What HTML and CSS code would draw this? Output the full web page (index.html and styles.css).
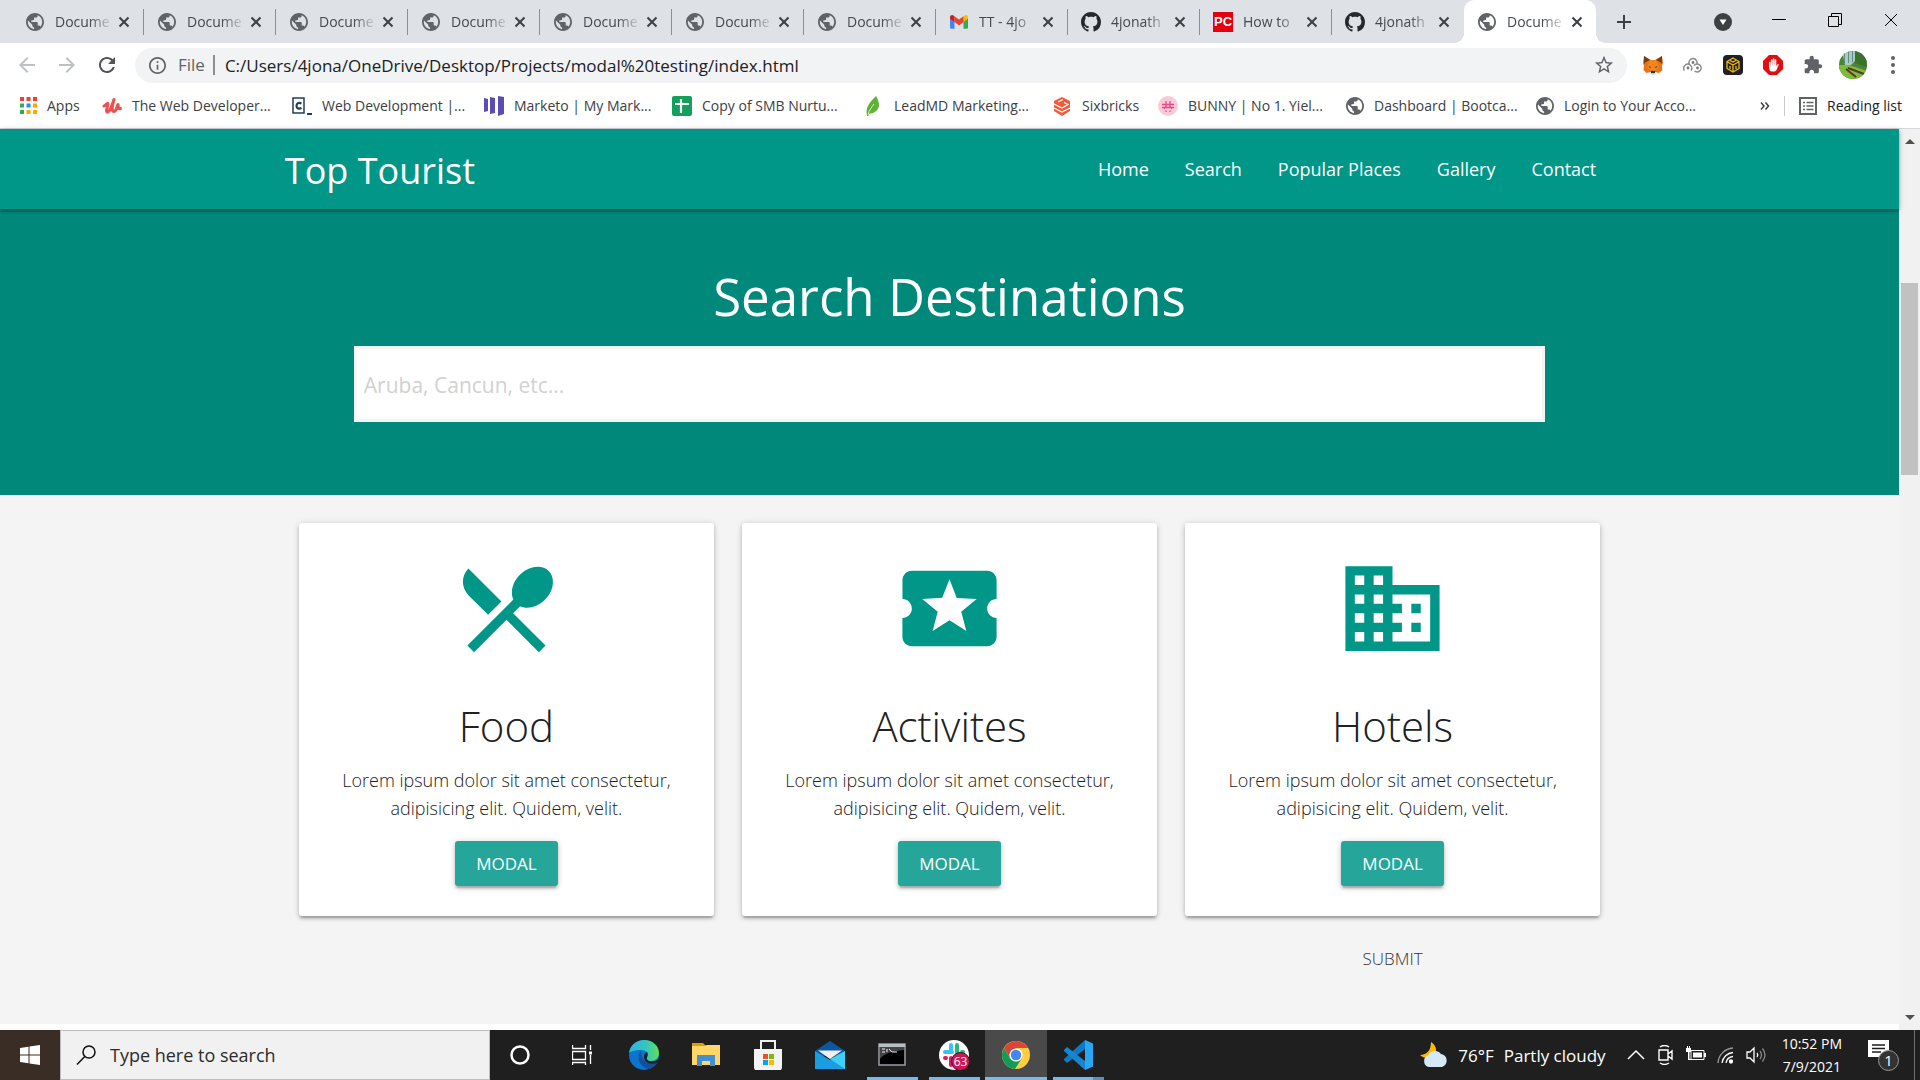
FILE: index.html
```html
<!DOCTYPE html>
<html lang="en">
<head>
<meta charset="utf-8">
<title>Document</title>
<link rel="stylesheet" href="styles.css">
</head>
<body>
<svg class="sprite" aria-hidden="true">
  <symbol id="globe" viewBox="2 2 20 20"><path fill="#5f6368" d="M12 2C6.48 2 2 6.48 2 12s4.48 10 10 10 10-4.48 10-10S17.52 2 12 2zm-1 17.93c-3.95-.49-7-3.85-7-7.93 0-.62.08-1.21.21-1.79L9 15v1c0 1.1.9 2 2 2v1.93zm6.9-2.54c-.26-.81-1-1.39-1.9-1.39h-1v-3c0-.55-.45-1-1-1H8v-2h2c.55 0 1-.45 1-1V7h2c1.1 0 2-.9 2-2v-.41c2.93 1.19 5 4.06 5 7.41 0 2.08-.8 3.97-2.1 5.39z"/></symbol>
  <symbol id="x" viewBox="0 0 12 12"><path d="M1.5 1.5l9 9M10.500 1.500l-9 9" stroke="#3c4043" stroke-width="2" fill="none"/></symbol>
  <symbol id="github" viewBox="0 0 16 16"><path fill="#24292e" d="M8 0C3.58 0 0 3.58 0 8c0 3.54 2.29 6.53 5.47 7.59.4.07.55-.17.55-.38 0-.19-.01-.82-.01-1.49-2.01.37-2.53-.49-2.69-.94-.09-.23-.48-.94-.82-1.13-.28-.15-.68-.52-.01-.53.63-.01 1.08.58 1.23.82.72 1.21 1.87.87 2.33.66.07-.52.28-.87.51-1.07-1.78-.2-3.64-.89-3.64-3.95 0-.87.31-1.59.82-2.15-.08-.2-.36-1.02.08-2.12 0 0 .67-.21 2.2.82.64-.18 1.320-.27 2-.27s1.360.09 2 .27c1.530-1.040 2.200-.82 2.200-.82.44 1.100.16 1.920.08 2.120.51.56.82 1.270.82 2.150 0 3.070-1.870 3.750-3.650 3.950.29.25.54.73.54 1.480 0 1.070-.01 1.930-.01 2.200 0 .21.15.46.55.38A8.010 8.010 0 0 0 16 8c0-4.420-3.580-8-8-8z"/></symbol>
</svg>

<header class="chrome">
  <div class="tabstrip">
    <div class="tab"><svg class="fav"><use href="#globe"/></svg><span class="tab-title">Docume</span><button class="tab-x" aria-label="Close tab"><svg><use href="#x"/></svg></button></div>
    <div class="tab"><svg class="fav"><use href="#globe"/></svg><span class="tab-title">Docume</span><button class="tab-x" aria-label="Close tab"><svg><use href="#x"/></svg></button></div>
    <div class="tab"><svg class="fav"><use href="#globe"/></svg><span class="tab-title">Docume</span><button class="tab-x" aria-label="Close tab"><svg><use href="#x"/></svg></button></div>
    <div class="tab"><svg class="fav"><use href="#globe"/></svg><span class="tab-title">Docume</span><button class="tab-x" aria-label="Close tab"><svg><use href="#x"/></svg></button></div>
    <div class="tab"><svg class="fav"><use href="#globe"/></svg><span class="tab-title">Docume</span><button class="tab-x" aria-label="Close tab"><svg><use href="#x"/></svg></button></div>
    <div class="tab"><svg class="fav"><use href="#globe"/></svg><span class="tab-title">Docume</span><button class="tab-x" aria-label="Close tab"><svg><use href="#x"/></svg></button></div>
    <div class="tab"><svg class="fav"><use href="#globe"/></svg><span class="tab-title">Docume</span><button class="tab-x" aria-label="Close tab"><svg><use href="#x"/></svg></button></div>
    <div class="tab"><svg class="fav" viewBox="0 0 24 18"><path fill="#4285f4" d="M0 2v14a2 2 0 0 0 2 2h4V8z"/><path fill="#34a853" d="M24 2v14a2 2 0 0 1-2 2h-4V8z"/><path fill="#c5221f" d="M0 2.500C0 0 3 -1 5 .5l1 .8V9L0 4.500z"/><path fill="#fbbc04" d="M24 2.500C24 0 21-1 19 .5l-1 .8V9l6-4.500z"/><path fill="#ea4335" d="M6 1.300l6 4.500 6-4.500V9l-6 4.500L6 9z"/></svg><span class="tab-title">TT - 4jo</span><button class="tab-x" aria-label="Close tab"><svg><use href="#x"/></svg></button></div>
    <div class="tab"><svg class="fav fav-lg"><use href="#github"/></svg><span class="tab-title">4jonath</span><button class="tab-x" aria-label="Close tab"><svg><use href="#x"/></svg></button></div>
    <div class="tab"><span class="fav fav-lg pcmag">PC</span><span class="tab-title">How to</span><button class="tab-x" aria-label="Close tab"><svg><use href="#x"/></svg></button></div>
    <div class="tab last"><svg class="fav fav-lg"><use href="#github"/></svg><span class="tab-title">4jonath</span><button class="tab-x" aria-label="Close tab"><svg><use href="#x"/></svg></button></div>
    <div class="tab active"><svg class="fav"><use href="#globe"/></svg><span class="tab-title">Docume</span><button class="tab-x" aria-label="Close tab"><svg><use href="#x"/></svg></button></div>
    <button class="newtab" aria-label="New tab"><svg viewBox="0 0 16 16"><path d="M8 1v14M1 8h14" stroke="#3c4043" stroke-width="2"/></svg></button>
    <div class="window-controls">
      <button aria-label="Search tabs"><svg viewBox="0 0 18 18"><circle cx="9" cy="9" r="9" fill="#3c4043"/><path d="M5.500 6.500h7L9 12z" fill="#fff"/></svg></button>
      <button aria-label="Minimize"><svg viewBox="0 0 18 18"><path d="M2 6.500h14" stroke="#000"/></svg></button>
      <button aria-label="Restore"><svg viewBox="0 0 18 18"><path d="M2.500 3.500h10v10h-10zM5.500 3V.5h10v11H13" fill="none" stroke="#000"/></svg></button>
      <button aria-label="Close"><svg viewBox="0 0 18 18"><path d="M3 1l12 12M15 1L3 13" stroke="#000"/></svg></button>
    </div>
  </div>

  <div class="toolbar">
    <button class="tool" aria-label="Back"><svg viewBox="0 0 24 24"><path fill="#bdc1c6" d="M20 11H7.830l5.590-5.590L12 4l-8 8 8 8 1.410-1.410L7.830 13H20v-2z"/></svg></button>
    <button class="tool" aria-label="Forward"><svg viewBox="0 0 24 24"><path fill="#bdc1c6" d="M4 13h12.170l-5.590 5.590L12 20l8-8-8-8-1.410 1.410L16.170 11H4v2z"/></svg></button>
    <button class="tool" aria-label="Reload"><svg viewBox="0 0 24 24"><path fill="#505357" d="M17.65 6.35C16.2 4.9 14.21 4 12 4c-4.42 0-7.99 3.58-7.99 8s3.57 8 7.99 8c3.73 0 6.84-2.55 7.73-6h-2.08c-.82 2.33-3.04 4-5.65 4-3.31 0-6-2.69-6-6s2.69-6 6-6c1.66 0 3.14.69 4.22 1.78L13 11h7V4l-2.35 2.35z"/></svg></button>
    <div class="omnibox">
      <svg class="info" viewBox="2 2 20 20"><path fill="#5f6368" d="M11 7h2v2h-2zm0 4h2v6h-2zm1-9C6.480 2 2 6.480 2 12s4.480 10 10 10 10-4.480 10-10S17.520 2 12 2zm0 18c-4.410 0-8-3.590-8-8s3.590-8 8-8 8 3.590 8 8-3.590 8-8 8z"/></svg>
      <span class="scheme">File</span>
      <input class="url" aria-label="Address" value="C:/Users/4jona/OneDrive/Desktop/Projects/modal%20testing/index.html">
      <svg class="star" viewBox="0 0 24 24"><path fill="#5f6368" d="M22 9.240l-7.190-.62L12 2 9.190 8.630 2 9.240l5.460 4.730L5.820 21 12 17.270 18.180 21l-1.630-7.030L22 9.240zM12 15.400l-3.760 2.270 1-4.280-3.320-2.880 4.380-.38L12 6.100l1.710 4.040 4.380.38-3.320 2.880 1 4.280L12 15.400z"/></svg>
    </div>
    <div class="extensions">
      <button aria-label="MetaMask"><svg viewBox="0 0 20 20"><path fill="#e2761b" d="M1 1l7 4h4l7-4 1 7-1 3 .5 4-3.500 3-4-1-2 1H9.500l-2-1-4 1L.5 15 1 11 0 8z"/><path fill="#763d16" d="M1 1l6 4-4 2-2 2zM19 1l-6 4 4 2 2 2z"/><path fill="#f6851b" d="M7 5h6l3 7-3 3H7l-3-3z"/><path fill="#233447" d="M5.500 11l2.500 1-1 1zM14.500 11L12 12l1 1zM8 16h4v2H8z"/><path fill="#d7c1b3" d="M7.500 18h5v1.500h-5z"/></svg></button>
      <button aria-label="Cloud extension"><svg viewBox="0 0 20 20" fill="none" stroke="#8a8a8a" stroke-width="1.400"><path d="M6.500 9.500a4 4 0 1 1 7 0M1.500 15.500a4 4 0 1 1 6.500 0M11 10.500a4 4 0 1 1 .5 5.500"/><g fill="#777" stroke="none"><circle cx="10" cy="7.500" r="1.400"/><circle cx="5" cy="13" r="1.400"/><circle cx="14.500" cy="13" r="1.400"/></g></svg></button>
      <button aria-label="Wallet"><svg viewBox="0 0 20 20"><rect width="20" height="20" rx="4" fill="#1e2026"/><path d="M10 3l6 3.500v7L10 17l-6-3.500v-7zM4.500 7L10 10l5.500-3M10 10v6.500M7 5.500L10 7l3-1.500M7 11v3M13 11v3" fill="none" stroke="#f0b90b" stroke-width="1.300"/></svg></button>
      <button aria-label="AdBlock"><svg viewBox="0 0 20 20"><path fill="#e40d0d" d="M6 0h8l6 6v8l-6 6H6l-6-6V6z"/><path fill="#fff" d="M6 12V7.500a.8.8 0 0 1 1.600 0V10h.3V5a.8.8 0 0 1 1.600 0v4.500h.3V4a.8.8 0 0 1 1.600 0v5.500h.3V5a.8.8 0 0 1 1.600 0v6l1-1.500c.6-.8 1.600-.3 1.300.5L13.500 15c-1 2-6 2-7 0z"/></svg></button>
      <button aria-label="Extensions"><svg viewBox="0 0 24 24"><path fill="#5f6368" d="M20.500 11H19V7c0-1.100-.9-2-2-2h-4V3.500C13 2.120 11.880 1 10.500 1S8 2.120 8 3.500V5H4c-1.100 0-1.990.9-1.990 2v3.800H3.500c1.490 0 2.700 1.210 2.700 2.700s-1.210 2.700-2.700 2.700H2V20c0 1.100.9 2 2 2h3.800v-1.500c0-1.490 1.210-2.700 2.700-2.700 1.490 0 2.700 1.210 2.700 2.700V22H17c1.100 0 2-.9 2-2v-4h1.500c1.380 0 2.500-1.120 2.500-2.500S21.880 11 20.500 11z"/></svg></button>
      <button class="avatar" aria-label="Profile"><svg viewBox="0 0 28 28"><defs><clipPath id="av"><circle cx="14" cy="14" r="14"/></clipPath></defs><g clip-path="url(#av)"><path fill="#4b8436" d="M0 0h28v28H0z"/><path fill="#a9cbc3" d="M3 0h13v10l-4 4H6z"/><path fill="#5d8f80" d="M5 0h1v12H5zM9 0h1v12H9zM13 0h1v11h-1z"/><path fill="#3c702d" d="M16 0h12v16l-12-4z"/><path fill="#7dbb3c" d="M0 14l10 0 18 6v8H0z"/><path d="M9 17l16 6M7 18l10 8" stroke="#5b3a25" stroke-width="2"/></g></svg></button>
      <button aria-label="Menu"><svg viewBox="0 0 20 20" fill="#5f6368"><circle cx="10" cy="3" r="2"/><circle cx="10" cy="10" r="2"/><circle cx="10" cy="17" r="2"/></svg></button>
    </div>
  </div>

  <nav class="bookmarks" aria-label="Bookmarks">
    <div class="bookmark-list">
      <a href="#"><svg class="bi bi-apps" viewBox="0 0 17 17"><path fill="#ea4335" d="M0 0h4v4H0zM6.500 0h4v4h-4zM13 0h4v4h-4z"/><path fill="#34a853" d="M0 6.500h4v4H0zM0 13h4v4H0z"/><path fill="#1a90ff" d="M6.500 6.500h4v4h-4z"/><path fill="#fbab00" d="M13 6.500h4v4h-4zM6.500 13h4v4h-4zM13 13h4v4h-4z"/></svg>Apps</a>
      <a href="#"><svg class="bi" viewBox="0 0 20 20"><path fill="none" stroke="#ec5252" stroke-width="3" stroke-linecap="round" stroke-linejoin="round" d="M2 10c2-1 4-4 4-2s-3 8-.5 8S10 9 12 3.500C10.500 8 9 16 12 15.500s2.500-5 4-7c.5 2 0 5 2.500 4"/></svg>The Web Developer...</a>
      <a href="#"><svg class="bi" viewBox="0 0 20 20"><path fill="none" stroke="#1f4056" stroke-width="1.500" d="M1 2h11v15H1z"/><path fill="none" stroke="#1f4056" stroke-width="2.200" d="M9.500 7.500c-3-1.500-5 0-5 2.200s2 3.800 5 2.300M15 18h5"/></svg>Web Development |...</a>
      <a href="#"><svg class="bi" viewBox="0 0 20 20"><path fill="#5c4bb5" d="M0 2l4 1v12l-4 1zM6 1l5 1v15l-5 1zM14 0l6 1v17l-6 2z"/></svg>Marketo | My Mark...</a>
      <a href="#"><svg class="bi" viewBox="0 0 20 20"><rect width="20" height="20" rx="2" fill="#12a05c"/><path stroke="#fff" stroke-width="2.200" d="M9 3v14M3 8h14"/></svg>Copy of SMB Nurtu...</a>
      <a href="#"><svg class="bi" viewBox="0 0 20 20"><path fill="#5fb236" d="M12 0c4 7 5 13-3 17-2 .5-4 0-4.500 3H3c-2-9 3-14 9-20z"/><path d="M4 19c1-5 4-8 6-11" fill="none" stroke="#d4efc3"/></svg>LeadMD Marketing...</a>
      <a href="#"><svg class="bi" viewBox="0 0 20 20"><path fill="#f15a38" d="M10 1l8 4v10l-8 5-8-5V5z"/><path fill="none" stroke="#fff" stroke-width="1.300" d="M2 8l8 4 6-3.500-4-2M2 12l8 4 8-4M6 6l5-2.500"/></svg>Sixbricks</a>
      <a href="#"><svg class="bi" viewBox="0 0 20 20"><circle cx="10" cy="10" r="10" fill="#fbcad6"/><path fill="none" stroke="#df4c8c" stroke-width="1.300" d="M8 5v5l-2 3M12 5v5l2 3M4 8.500h12M4 11.500h12M8 14.500v1.500M12 14.500v1.500"/></svg>BUNNY | No 1. Yiel...</a>
      <a href="#"><svg class="bi globe"><use href="#globe"/></svg>Dashboard | Bootca...</a>
      <a href="#"><svg class="bi globe"><use href="#globe"/></svg>Login to Your Acco...</a>
    </div>
    <button class="more" aria-label="More bookmarks"><svg viewBox="0 0 10 10"><path d="M1 1.500L4 5 1 8.500M5.500 1.500l3 3.500-3 3.500" fill="none" stroke="#3c4043" stroke-width="1.500"/></svg></button>
    <button class="reading"><svg viewBox="0 0 18 18"><path d="M1 1h16v16H1z" fill="none" stroke="#5f6368" stroke-width="2"/><path d="M4 5.500h2M7.500 5.500h7M4 9h2M7.500 9h7M4 12.500h2M7.500 12.500h7" stroke="#5f6368" stroke-width="1.500"/></svg>Reading list</button>
  </nav>
</header>

<div class="viewport">
  <div class="page">
    <nav class="navbar">
      <div class="container nav-inner">
        <a class="brand" href="#">Top Tourist</a>
        <ul class="nav-links">
          <li><a href="#home">Home</a></li>
          <li><a href="#search">Search</a></li>
          <li><a href="#popular">Popular Places</a></li>
          <li><a href="#gallery">Gallery</a></li>
          <li><a href="#contact">Contact</a></li>
        </ul>
      </div>
    </nav>

    <section class="search" id="search">
      <div class="container search-inner">
        <h3><label for="destination">Search Destinations</label></h3>
        <input id="destination" type="text" placeholder="Aruba, Cancun, etc...">
      </div>
    </section>

    <section class="features">
      <div class="container cards">
        <article class="card">
          <svg class="card-icon" viewBox="0 0 24 24"><path d="M8.100 13.340l2.830-2.830L3.910 3.500c-1.560 1.560-1.560 4.090 0 5.660l4.190 4.180zm6.780-1.810c1.530.71 3.680.21 5.270-1.380 1.910-1.910 2.280-4.650.81-6.120-1.460-1.460-4.200-1.100-6.120.81-1.590 1.590-2.090 3.740-1.380 5.270L3.700 19.870l1.410 1.410L12 14.410l6.880 6.880 1.410-1.410L13.410 13l1.470-1.470z"/></svg>
          <h4>Food</h4>
          <p>Lorem ipsum dolor sit amet consectetur, adipisicing elit. Quidem, velit.</p>
          <button class="btn">MODAL</button>
        </article>
        <article class="card">
          <svg class="card-icon" viewBox="0 0 24 24"><path d="M20 12c0-1.100.9-2 2-2V6c0-1.100-.9-2-2-2H4c-1.100 0-1.990.9-1.990 2v4c1.100 0 1.990.9 1.990 2s-.89 2-2 2v4c0 1.100.9 2 2 2h16c1.100 0 2-.9 2-2v-4c-1.100 0-2-.9-2-2zm-4.420 4.800L12 14.500l-3.580 2.300 1.080-4.120-3.290-2.690 4.240-.25L12 5.800l1.540 3.950 4.240.25-3.290 2.690 1.090 4.110z"/></svg>
          <h4>Activites</h4>
          <p>Lorem ipsum dolor sit amet consectetur, adipisicing elit. Quidem, velit.</p>
          <button class="btn">MODAL</button>
        </article>
        <article class="card">
          <svg class="card-icon" viewBox="0 0 24 24"><path d="M12 7V3H2v18h20V7H12zM6 19H4v-2h2v2zm0-4H4v-2h2v2zm0-4H4V9h2v2zm0-4H4V5h2v2zm4 12H8v-2h2v2zm0-4H8v-2h2v2zm0-4H8V9h2v2zm0-4H8V5h2v2zm10 12h-8v-2h2v-2h-2v-2h2v-2h-2V9h8v10zm-2-8h-2v2h2v-2zm0 4h-2v2h2v-2z"/></svg>
          <h4>Hotels</h4>
          <p>Lorem ipsum dolor sit amet consectetur, adipisicing elit. Quidem, velit.</p>
          <button class="btn">MODAL</button>
        </article>
        <button class="submit">SUBMIT</button>
      </div>
    </section>
  </div>
  <div class="scrollbar" aria-hidden="true">
    <svg viewBox="0 0 10 6"><path d="M0 6l5-5 5 5z" fill="#505050"/></svg>
    <div class="track"><div class="thumb"></div></div>
    <svg viewBox="0 0 10 6"><path d="M0 0l5 5 5-5z" fill="#505050"/></svg>
  </div>
</div>

<footer class="taskbar">
  <button class="start" aria-label="Start"><svg viewBox="0 0 20 20"><path fill="#fff" d="M0 3l8.500-1.200v7.700H0zM9.500 1.600L20 0v9.500H9.500zM0 10.500h8.500v7.700L0 17zM9.500 10.500H20V20L9.500 18.400z"/></svg></button>
  <label class="find"><svg viewBox="0 0 20 20"><circle cx="13" cy="7" r="6" fill="none" stroke="#111" stroke-width="1.500"/><path d="M8.800 11.500L1 19.500" stroke="#111" stroke-width="1.500"/></svg><input type="text" aria-label="Search Windows" placeholder="Type here to search"></label>
  <div class="apps">
    <button aria-label="Cortana"><svg class="s20" viewBox="0 0 20 20"><circle cx="10" cy="10" r="8.500" fill="none" stroke="#fff" stroke-width="2.500"/></svg></button>
    <button aria-label="Task view"><svg class="s20" viewBox="0 0 20 20" fill="none" stroke="#fff" stroke-width="1.300"><path d="M.5 0v3.500h13V0M.5 6.500h13v8H.5zM.5 20v-2.500h13V20M18.500 0v5M18.500 10v9"/><path d="M17 6.500h3v3h-3z" fill="#fff" stroke="none"/></svg></button>
    <button aria-label="Edge"><svg class="s30" viewBox="0 0 30 30"><defs><linearGradient id="e1" x1="0" x2="1"><stop offset="0" stop-color="#2bb3ea"/><stop offset=".6" stop-color="#36c8b8"/><stop offset="1" stop-color="#62e052"/></linearGradient></defs><circle cx="15" cy="15" r="15" fill="#0a74cf"/><path fill="url(#e1)" d="M0 13C1 5 8 0 15 0c9 0 15 6 15 13 0 5-4 8-8 8-3 0-5-1-4-3 2-4 0-8-6-8-5 0-10 1-12 3z"/><path fill="#124f9e" d="M12 11c-6 7 0 17 8 18 4-1 7-4 9-7-9 4-17-1-17-11z"/><path fill="#1f1f1f" d="M18 12c2 3-1 5 0 7.500 2 2.500 7 2.500 11.500 0l.5 2.500c-3 1.500-6 2-9 1.500-4-.6-6-4-6-7 0-2.500 1.500-3.500 3-4.500z"/></svg></button>
    <button aria-label="File Explorer"><svg class="s30" viewBox="0 0 30 30"><path fill="#e09b00" d="M1 3h11l3 3v4H1z"/><path fill="#ffd667" d="M1 6h12l3-1h13v20H1z"/><path fill="#3f91d4" d="M6 26V15h18v11h-5v-5h-8v5z"/></svg></button>
    <button aria-label="Store"><svg class="s30" viewBox="0 0 30 30"><path fill="none" stroke="#eee" stroke-width="2" d="M8 10V1h14v9"/><path fill="#f3f3f3" d="M1 9h28v19l-1 2H2l-1-2z"/><path fill="#f25022" d="M10 14h5v5h-5z"/><path fill="#7fba00" d="M16 14h5v5h-5z"/><path fill="#00a4ef" d="M10 20h5v5h-5z"/><path fill="#ffb900" d="M16 20h5v5h-5z"/></svg></button>
    <button aria-label="Mail"><svg class="s30" viewBox="0 0 30 30"><path fill="#0a57a8" d="M0 11l15-10 15 10v5H0z"/><path fill="#1b9de2" d="M0 11l15 9 15-9v18H0z"/><path fill="#3ed0f6" d="M30 11v18L15 19z"/><path fill="#f0f0f0" d="M3 10.500h24L15 19z"/></svg></button>
    <button class="open" aria-label="Command Prompt"><svg class="s30" viewBox="0 0 30 30"><path fill="#000" stroke="#9a9fa5" stroke-width="1.500" d="M2 4h26v21H2z"/><path fill="#b8bfc5" d="M2 4h26v3H2z"/><path fill="#444" d="M3 7h24v3C15 11 6 14 3 19z"/><path d="M5 9h3M5 12h3M10 9v3M12 9l3 3M15 12h5" stroke="#eee"/></svg></button>
    <button class="open" aria-label="Slack"><svg class="s30" viewBox="0 0 30 30"><circle cx="15" cy="15" r="15" fill="#fff"/><g stroke-width="4" stroke-linecap="round"><path stroke="#36c5f0" d="M12 5v5M6 12h7"/><path stroke="#2eb67d" d="M18 5v8M24 12h-1"/><path stroke="#e01e5a" d="M6 18h1M12 18v7"/><path stroke="#ecb22e" d="M18 18h6"/></g><circle cx="21.500" cy="21.500" r="9" fill="#cf1757" stroke="#3a0d1e"/><text class="badge-text" x="21.500" y="26" text-anchor="middle">63</text></svg></button>
    <button class="open current" aria-label="Chrome"><svg class="s28" viewBox="0 0 28 28"><circle cx="14" cy="14" r="14" fill="#ffcd40"/><path fill="#db4437" d="M2 7a14 14 0 0 1 24.200 0H14L8 17z"/><path fill="#0f9d58" d="M1.900 7A14 14 0 0 0 13 28l7-11-12 0z"/><circle cx="14" cy="14" r="6.600" fill="#fff"/><circle cx="14" cy="14" r="5.200" fill="#4285f4"/></svg></button>
    <button class="open grouped" aria-label="Visual Studio Code"><svg class="s30" viewBox="0 0 30 30"><path fill="#0b7bc9" d="M22 0v9L4 23l-3-3v-1z"/><path fill="#1586d2" d="M22 30v-9L4 7 1 10v1z"/><path fill="#2aa7f2" d="M22 0l8 3.500v23L22 30z"/></svg></button>
  </div>
  <div class="tray">
    <div class="weather"><svg viewBox="0 0 28 26"><path fill="#ffb900" d="M11 0c5 3 7 9 3 13S4 17 0 13c7 0 11-5 11-13z"/><path fill="#d5e8f8" d="M9 25a6 6 0 0 1-1-11.500 7.500 7.500 0 0 1 13-1.500A6.700 6.700 0 0 1 22 25z"/></svg><span>76°F</span><span>Partly cloudy</span></div>
    <svg class="tray-icon" viewBox="0 0 20 20"><path d="M2 14l8-8 8 8" fill="none" stroke="#fff" stroke-width="1.500"/></svg>
    <svg class="tray-icon" viewBox="0 0 20 20" fill="none" stroke="#fff" stroke-width="1.400"><path d="M3 5h9v10H3zM12 9l4-3v8l-4-3M4 2c3-2 6-2 9 0M4 18c3 2 6 2 9 0"/></svg>
    <svg class="tray-icon" viewBox="0 0 20 20"><path d="M5 5.500h13v9H5z" fill="none" stroke="#fff"/><path d="M7 7.500h9v5H7zM18 8h2v4h-2zM0 3h5v4H0zM2 7h1.500v7H5v1H2z" fill="#fff"/><path d="M1.500 1v3M3.500 1v3" stroke="#fff"/></svg>
    <svg class="tray-icon" viewBox="0 0 20 20" fill="none" stroke="#fff" stroke-width="1.300"><path stroke="#999" d="M2 18A16 16 0 0 1 17 3"/><path d="M6 18A12 12 0 0 1 17 7.500M10 18a8 8 0 0 1 7-6.500"/><circle cx="15" cy="16.500" r="1.500" fill="#fff"/></svg>
    <svg class="tray-icon" viewBox="0 0 20 20" fill="none" stroke="#fff" stroke-width="1.300"><path d="M1 7h3l4-4v14l-4-4H1z"/><path d="M11 8q1.500 2 0 4"/><path stroke="#888" d="M14 6q3 4 0 8M16.500 3.500q5 6.500 0 13"/></svg>
    <div class="clock"><span>10:52 PM</span><span>7/9/2021</span></div>
    <button class="notify" aria-label="Notifications"><svg viewBox="0 0 32 32"><path fill="#fff" d="M0 1h21v17h-6l-4 5v-5H0z"/><path d="M4 6h13M4 9.500h13M4 13h9" stroke="#1f1f1f" stroke-width="1.300"/><circle cx="20.500" cy="21.500" r="10" fill="#333" stroke="#999"/><text class="notify-text" x="20.500" y="27" text-anchor="middle">1</text></svg></button>
  </div>
</footer>
</body>
</html>
```
FILE: styles.css
```css
* { box-sizing: border-box; }

body {
  margin: 0;
  min-height: 100vh;
  display: flex;
  flex-direction: column;
  font-family: "Open Sans", "Noto Sans", sans-serif;
  background: #fff;
  color: #212121;
}

button {
  border: 0;
  padding: 0;
  background: none;
  font: inherit;
  color: inherit;
}

input { font: inherit; border: 0; outline: 0; min-width: 0; }
a { color: inherit; text-decoration: none; }
svg { display: block; flex: none; }
.sprite { position: absolute; width: 0; height: 0; }

/* Browser tabs */
.chrome { flex: none; border-bottom: 1px solid #d5d7da; }

.tabstrip {
  display: flex;
  align-items: center;
  height: 43px;
  padding-left: 12px;
  background: #dee1e6;
}

.tab {
  flex: 0 1 132px;
  min-width: 0;
  display: flex;
  align-items: center;
  height: 26px;
  padding: 0 13px 0 14px;
  border-right: 1px solid #8b8e92;
  font-size: 14px;
  color: #45494d;
}

.tab.last { border-color: transparent; }

.tab.active {
  position: relative;
  height: 43px;
  border: 0;
  border-radius: 10px 10px 0 0;
  background: #fff;
}

/* Curved feet that join the active tab to the toolbar */
.tab.active::before,
.tab.active::after {
  content: "";
  position: absolute;
  bottom: 0;
  width: 10px;
  height: 10px;
}

.tab.active::before { right: 100%; background: radial-gradient(circle at 0 0, transparent 10px, #fff 10px); }
.tab.active::after { left: 100%; background: radial-gradient(circle at 100% 0, transparent 10px, #fff 10px); }

.fav { flex: none; width: 18px; height: 18px; margin-right: 11px; }
.fav-lg { width: 20px; height: 20px; margin: 0 10px 0 -1px; }

.pcmag {
  background: #e3000f;
  color: #fff;
  font: bold 13px/20px "Liberation Sans", sans-serif;
  text-align: center;
}

.tab-title {
  flex: 1;
  white-space: nowrap;
  -webkit-mask-image: linear-gradient(90deg, #000 60%, transparent);
  mask-image: linear-gradient(90deg, #000 60%, transparent);
}

.tab-x { margin-left: 5px; }
.tab-x svg { width: 12px; height: 12px; }
.newtab { margin-left: 20px; }
.newtab svg { width: 16px; height: 16px; }
.window-controls { display: flex; gap: 38px; margin-left: auto; margin-right: 20px; }
.window-controls svg { width: 18px; height: 18px; }

/* Toolbar */
.toolbar {
  display: flex;
  align-items: center;
  height: 44px;
  padding: 0 17px 0 15px;
}

.tool { width: 40px; }
.tool svg { width: 24px; height: 24px; }

.omnibox {
  flex: 1;
  display: flex;
  align-items: center;
  height: 35px;
  margin-right: 16px;
  padding: 0 12px 0 14px;
  border-radius: 18px;
  background: #f1f3f4;
  font-size: 17px;
}

.info { width: 17px; height: 17px; margin-right: 12px; }
.scheme { padding-right: 8px; border-right: 2px solid #8b8e92; line-height: 20px; color: #5f6368; }
.url { flex: 1; padding: 0 10px; background: none; color: #202124; }
.star { width: 22px; height: 22px; }
.extensions { display: flex; align-items: center; gap: 20px; }
.extensions svg { width: 20px; height: 20px; }
.extensions .avatar { margin: 0 -4px; }
.extensions .avatar svg { width: 28px; height: 28px; }

/* Bookmarks */
.bookmarks {
  display: flex;
  align-items: center;
  height: 41px;
  padding: 0 18px 4px 20px;
  font-size: 14px;
  color: #3c4043;
}

.bookmark-list {
  flex: 1;
  display: grid;
  grid-template-columns: 82px 190px 192px 188px 192px 188px 106px 188px 190px 1fr;
  white-space: nowrap;
}

.bookmark-list a { display: flex; align-items: center; gap: 10px; }
.bi { width: 20px; height: 20px; }
.bi-apps { width: 17px; height: 17px; }
.globe { width: 18px; height: 18px; }
.more { padding: 0 14px; }
.more svg { width: 10px; height: 10px; }
.reading { display: flex; align-items: center; gap: 10px; height: 20px; padding-left: 14px; border-left: 1px solid #c8cacd; color: #202124; }
.reading svg { width: 18px; height: 18px; }

/* Web page */
.viewport { flex: 1; display: flex; min-height: 0; }
.page { flex: 1; min-width: 0; }
.container { width: 70%; margin: 0 auto; }

.navbar {
  position: relative;
  background: #009688;
  color: #fff;
  box-shadow: 0 2px 3px rgba(0, 0, 0, .3), 0 1px 6px rgba(0, 0, 0, .2);
}

.nav-inner { display: flex; justify-content: space-between; height: 80px; }
.brand { font-size: 36px; line-height: 84px; }
.nav-links { display: flex; margin: 0; padding: 0; list-style: none; font-size: 18px; }
.nav-links a { display: block; padding: 0 18px; line-height: 80px; }

.search { background: #00897b; color: #fff; }
.search-inner { padding: 56px 69px 73px; text-align: center; }
.search h3 { margin: 0 0 19px; font-size: 51px; line-height: 62px; font-weight: 400; }

.search input {
  display: block;
  width: 100%;
  height: 76px;
  padding: 2px 7px 0;
  border: 3px solid #f5f5f5;
  background: #fff;
  font-size: 21px;
}

.search input::placeholder { color: #d1d1d1; opacity: 1; }

.features { padding: 28px 0 43px; background: #f4f4f4; }
.cards { display: grid; grid-template-columns: repeat(3, 1fr); gap: 20px 28px; padding: 0 14px; }

.card {
  display: flex;
  flex-direction: column;
  align-items: center;
  padding: 29px 30px 30px;
  border-radius: 3px;
  background: #fff;
  text-align: center;
  box-shadow: 0 3px 3px rgba(0, 0, 0, .14), 0 4px 1px -2px rgba(0, 0, 0, .12), 0 1px 6px rgba(0, 0, 0, .2);
}

.card-icon { width: 113px; height: 113px; fill: #009688; }
.card h4 { margin: 36px 0 15px; font-size: 42px; line-height: 50px; font-weight: 300; }
.card p { margin: 0 0 19px; font-size: 18px; line-height: 28px; font-weight: 300; }

.btn {
  height: 45px;
  padding: 0 21px;
  border-radius: 3px;
  background: #26a69a;
  color: #fff;
  font-size: 17px;
  box-shadow: 0 3px 3px rgba(0, 0, 0, .14), 0 4px 1px -2px rgba(0, 0, 0, .12), 0 1px 6px rgba(0, 0, 0, .2);
}

.submit { grid-column: 3; justify-self: center; height: 45px; font-size: 17px; font-weight: 300; color: #343434; }

.scrollbar {
  flex: 0 0 21px;
  display: flex;
  flex-direction: column;
  align-items: center;
  padding: 9px 0;
  background: #f1f1f1;
}

.scrollbar svg { width: 10px; height: 6px; }
.track { flex: 1; width: 17px; padding-top: 139px; }
.thumb { height: 192px; background: #c1c1c1; }

/* Taskbar */
.taskbar { flex: none; display: flex; height: 50px; background: #1f1f1f; color: #fff; }
.start { width: 60px; display: grid; place-items: center; background: #3a2d25; }
.start svg { width: 20px; height: 20px; }

.find {
  flex: 0 0 430px;
  display: flex;
  align-items: center;
  gap: 14px;
  padding: 0 15px;
  border: 1px solid #bdbdbd;
  background: #f1f1f1;
}

.find svg { width: 20px; height: 20px; }
.find input { flex: 1; padding: 0; background: none; font-size: 18px; }
.find input::placeholder { color: #2b2b2b; opacity: 1; }

.apps { display: flex; margin-left: -1px; }
.apps button { width: 62px; display: grid; place-items: center; }
.s20 { width: 20px; height: 20px; }
.s28 { width: 28px; height: 28px; }
.s30 { width: 30px; height: 30px; }
.open { background: linear-gradient(#76b9ed, #76b9ed) bottom / 51px 3px no-repeat; }
.apps .current { background: #76b9ed linear-gradient(#4a4a4a, #4a4a4a) top / 100% 47px no-repeat; }
.grouped { background-image: linear-gradient(90deg, #76b9ed 40px, #5a8fc0 40px); }
.badge-text { font-size: 12px; fill: #fff; }
.notify-text { font-size: 15px; fill: #fff; }

.tray { display: flex; align-items: center; margin-left: auto; gap: 10px; border-right: 1px solid #6f6f6f; margin-right: 5px; }
.weather { display: flex; align-items: center; gap: 10px; font-size: 17px; margin-right: 10px; }
.weather svg { width: 28px; height: 26px; }
.tray-icon { width: 20px; height: 20px; }
.clock { display: flex; flex-direction: column; align-items: center; margin: 0 16px 0 6px; font-size: 14px; line-height: 23px; }
.notify { margin-right: 14px; }
.notify svg { width: 32px; height: 32px; }
```
